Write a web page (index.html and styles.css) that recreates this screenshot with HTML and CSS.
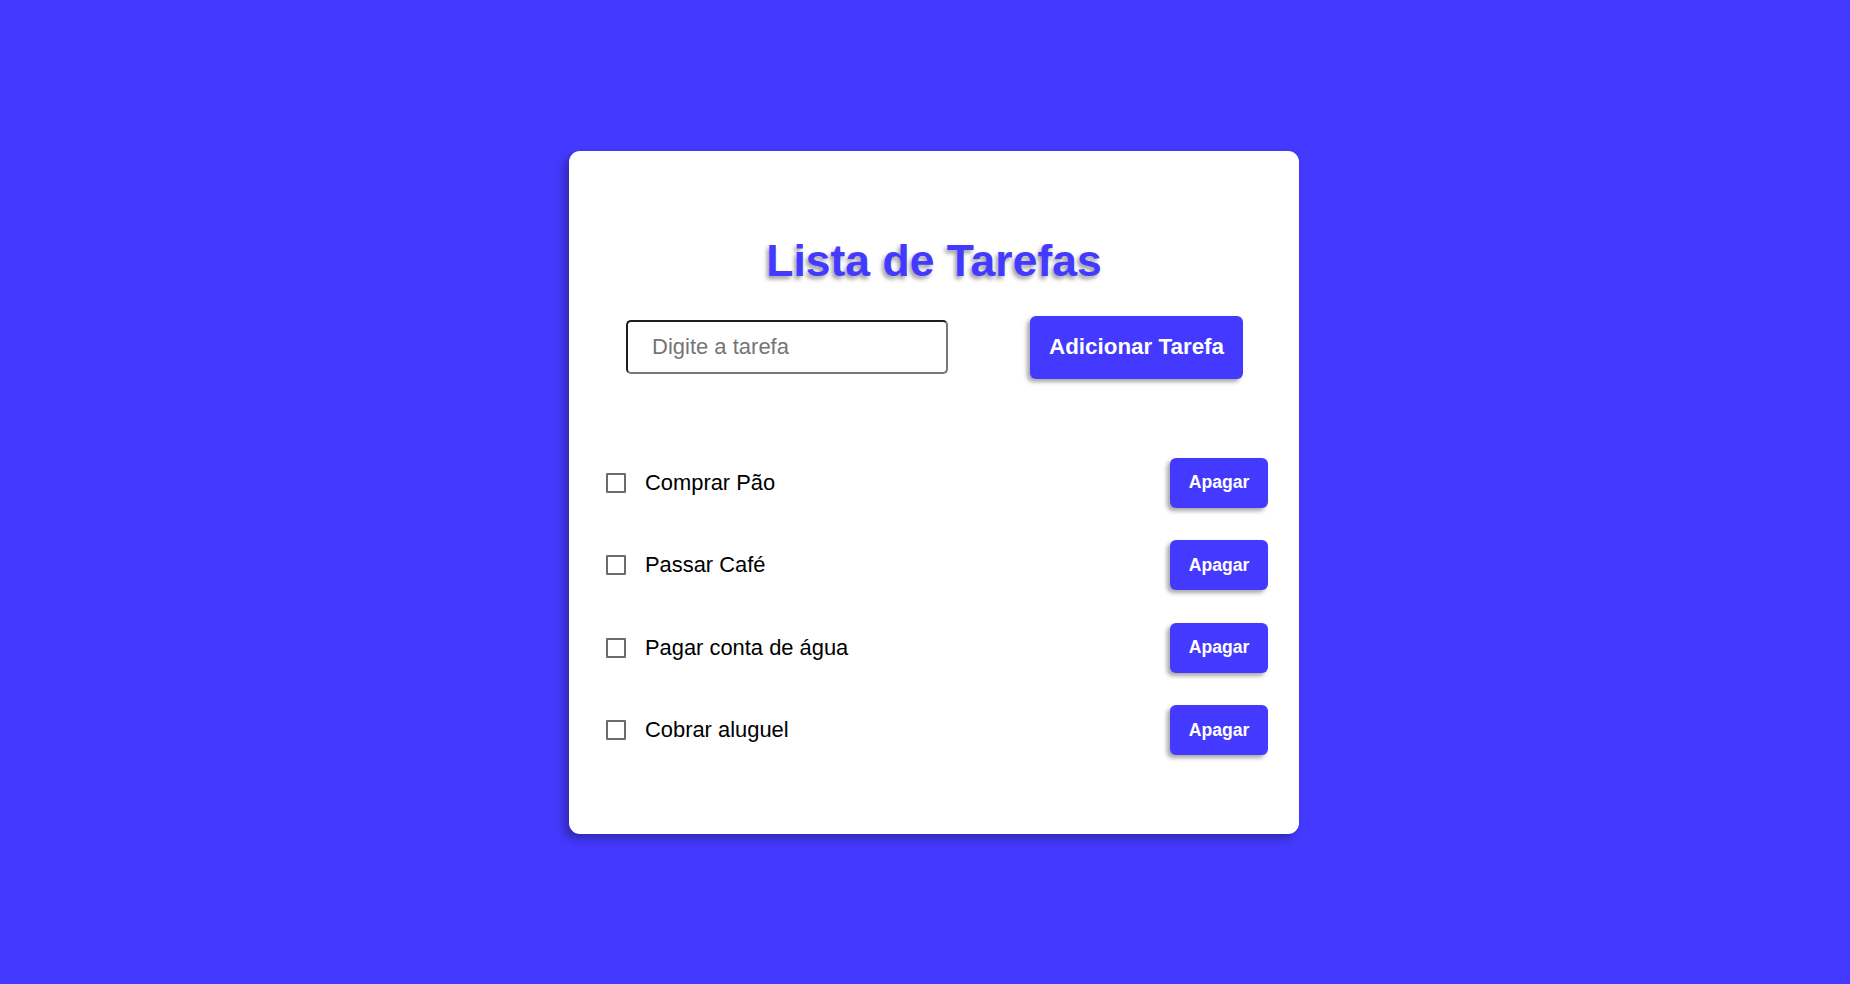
FILE: index.html
```html
<!DOCTYPE html>
<html lang="pt-BR">
<head>
<meta charset="UTF-8">
<title>Lista de Tarefas</title>
<link rel="stylesheet" href="styles.css">
</head>
<body>
  <main class="card">
    <h1 class="title">Lista de Tarefas</h1>
    <div class="form-row">
      <input class="task-input" type="text" placeholder="Digite a tarefa">
      <button class="btn btn-add">Adicionar Tarefa</button>
    </div>
    <ul class="task-list">
      <li class="task">
        <label class="task-label"><input class="check" type="checkbox"><span>Comprar Pão</span></label>
        <button class="btn btn-del">Apagar</button>
      </li>
      <li class="task">
        <label class="task-label"><input class="check" type="checkbox"><span>Passar Café</span></label>
        <button class="btn btn-del">Apagar</button>
      </li>
      <li class="task">
        <label class="task-label"><input class="check" type="checkbox"><span>Pagar conta de água</span></label>
        <button class="btn btn-del">Apagar</button>
      </li>
      <li class="task">
        <label class="task-label"><input class="check" type="checkbox"><span>Cobrar aluguel</span></label>
        <button class="btn btn-del">Apagar</button>
      </li>
    </ul>
  </main>
</body>
</html>
```

FILE: styles.css
```css
* {
  box-sizing: border-box;
}

html, body {
  margin: 0;
  padding: 0;
}

body {
  height: 100vh;
  background: #443aff;
  display: flex;
  align-items: center;
  justify-content: center;
  font-family: "Liberation Sans", Arial, sans-serif;
}

.card {
  width: 730px;
  height: 683px;
  margin-left: 18px;
  background: #ffffff;
  border-radius: 11px;
  box-shadow: -5px 5px 10px rgba(0, 0, 0, 0.3);
  padding: 85px 0 0;
}

.title {
  margin: 0;
  font-size: 44.5px;
  line-height: 50px;
  font-weight: bold;
  text-align: center;
  color: #443aff;
  text-shadow: -2px 3px 4px rgba(0, 0, 0, 0.4);
}

.form-row {
  margin-top: 30px;
  padding: 0 56px 0 57px;
  display: flex;
  align-items: center;
  justify-content: space-between;
}

.task-input {
  width: 322px;
  height: 54px;
  padding: 0 24px;
  font-family: "Liberation Sans", Arial, sans-serif;
  font-size: 22px;
  color: #000;
  border: 2px solid #767676;
  border-top-color: #1e1e1e;
  border-left-color: #1e1e1e;
  border-radius: 5px;
  outline: none;
}

.task-input::placeholder {
  color: #757575;
}

.btn {
  background: #443aff;
  color: #ffffff;
  border: none;
  font-family: "Liberation Sans", Arial, sans-serif;
  font-weight: bold;
  border-radius: 6px;
  box-shadow: -3px 3px 4px rgba(0, 0, 0, 0.35);
  cursor: pointer;
}

.btn-add {
  width: 213px;
  height: 63px;
  font-size: 22.4px;
  padding: 0;
}

.task-list {
  list-style: none;
  margin: 79px 0 0;
  padding: 0 31px 0 37px;
  display: flex;
  flex-direction: column;
  gap: 32.6px;
}

.task {
  display: flex;
  align-items: center;
  justify-content: space-between;
  height: 50px;
}

.task-label {
  display: flex;
  align-items: center;
  gap: 19px;
  font-size: 21.9px;
  color: #000;
}

.check {
  appearance: none;
  -webkit-appearance: none;
  margin: 0;
  width: 20px;
  height: 20px;
  border: 2px solid #6b6b6b;
  border-radius: 1px;
  background: #fff;
}

.btn-del {
  width: 98px;
  height: 50px;
  font-size: 17.6px;
  padding: 0;
}
```
